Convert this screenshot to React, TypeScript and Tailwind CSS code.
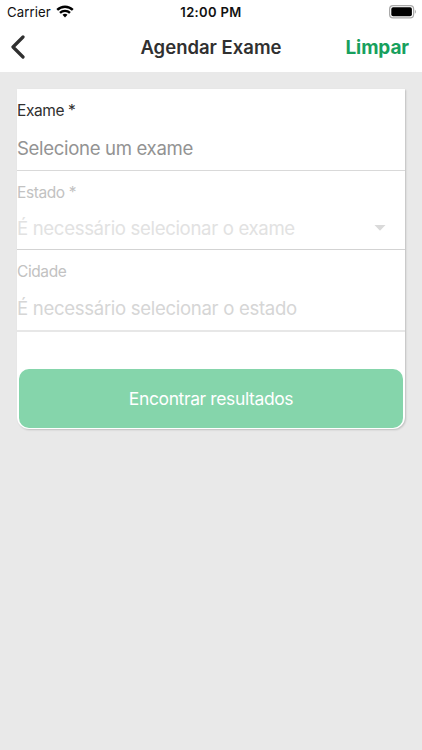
import React from 'react';

interface FieldProps {
  label: string;
  placeholder: string;
  className: string;
  labelClass: string;
  valueClass: string;
  hasArrow?: boolean;
}

const Field: React.FC<FieldProps> = ({ label, placeholder, className, labelClass, valueClass, hasArrow }) => (
  <div className={`flex flex-col ${className}`}>
    <span className={`text-[15.5px] leading-5 tracking-[-0.4px] whitespace-nowrap ${labelClass}`}>{label}</span>
    <div className="flex items-center justify-between pr-[19px]">
      <span className={`text-[18.6px] leading-6 whitespace-nowrap ${valueClass}`}>{placeholder}</span>
      {hasArrow && (
        <svg width="12" height="6" viewBox="0 0 12 6" className="fill-[#dadada]">
          <path d="M0.5 0h11L6 5.8z" />
        </svg>
      )}
    </div>
  </div>
);

const StatusBar: React.FC = () => (
  <div className="grid h-6 grid-cols-3 items-center text-[13px] leading-6 text-[#111]">
    <div className="flex items-center gap-[5px] pl-[7px]">
      <span className="text-[13.2px] tracking-[0.1px]">Carrier</span>
      {/* Wi-Fi */}
      <svg width="18" height="13" viewBox="0 0 18 13" fill="none" stroke="#000" strokeWidth="2.4" className="mb-px">
        <path d="M1.2 4.9a11.2 11.2 0 0 1 15.6 0" />
        <path d="M4 7.9a7.2 7.2 0 0 1 10 0" />
        <path d="M9 12.4l-2.5-2.6a3.7 3.7 0 0 1 5 0z" fill="#000" stroke="none" />
      </svg>
    </div>
    <span className="text-center font-semibold tracking-[0.35px]">12:00 PM</span>
    {/* Battery */}
    <svg width="28" height="14" viewBox="0 0 28 14" className="mr-[5px] mb-px justify-self-end">
      <rect x="0.6" y="0.7" width="24" height="12.2" rx="3.4" fill="none" stroke="#a9a9a9" strokeWidth="1.2" />
      <rect x="2.3" y="2.3" width="20.6" height="9" rx="1.8" fill="#000" />
      <path d="M25.8 4.8c1.5.5 1.5 3.5 0 4z" fill="#a9a9a9" />
    </svg>
  </div>
);

const App: React.FC = () => {
  return (
    <div className="h-[750px] w-full overflow-hidden bg-[#e9e9e9] font-['Inter',sans-serif]">
      <header className="h-[72px] bg-white">
        <StatusBar />
        <div className="grid h-[46px] grid-cols-[100px_1fr_100px] items-center">
          <button type="button" aria-label="Voltar" className="pl-[10px]">
            <svg width="16" height="24" viewBox="0 0 16 24" fill="none" stroke="#303030" strokeWidth="3.2" strokeLinecap="round" strokeLinejoin="round">
              <path d="M13 2L3 12l10 10" />
            </svg>
          </button>
          <h1 className="pt-[2px] text-center text-[18.5px] font-semibold whitespace-nowrap text-[#303030]">Agendar Exame</h1>
          <button type="button" className="pt-[2px] pr-[13px] text-right text-[19px] font-bold tracking-[-0.1px] text-[#17a05d]">
            Limpar
          </button>
        </div>
      </header>

      <main className="px-[17px] pt-[17px]">
        <form className="flex h-[340px] w-[388px] flex-col rounded-b-[12px] bg-white shadow-[1px_1px_2px_rgba(0,0,0,0.18)]">
          <Field
            label="Exame *"
            placeholder="Selecione um exame"
            className="h-[82px] gap-[15px] border-b border-[#d9d9d9] pt-[12px]"
            labelClass="text-[#303030]"
            valueClass="tracking-[-0.34px] text-[#939393]"
          />
          <Field
            label="Estado *"
            placeholder="É necessário selecionar o exame"
            className="h-[79px] gap-[13px] border-b border-[#d3d3d3] pt-[12px]"
            labelClass="text-[#c2c2c2]"
            valueClass="tracking-[-0.34px] text-[#e2e2e2]"
            hasArrow
          />
          <Field
            label="Cidade"
            placeholder="É necessário selecionar o estado"
            className="h-[82px] gap-[14px] border-b-2 border-[#e7e7e7] pt-[12px]"
            labelClass="text-[#c2c2c2]"
            valueClass="tracking-[-0.32px] text-[#d6d6d6]"
          />
          <button
            type="button"
            className="mx-[2px] mt-auto mb-[1px] h-[59px] rounded-[10px] bg-[#85d5ab] pt-[2px] text-[17.5px] tracking-[-0.38px] text-white"
          >
            Encontrar resultados
          </button>
        </form>
      </main>
    </div>
  );
};

export default App;
